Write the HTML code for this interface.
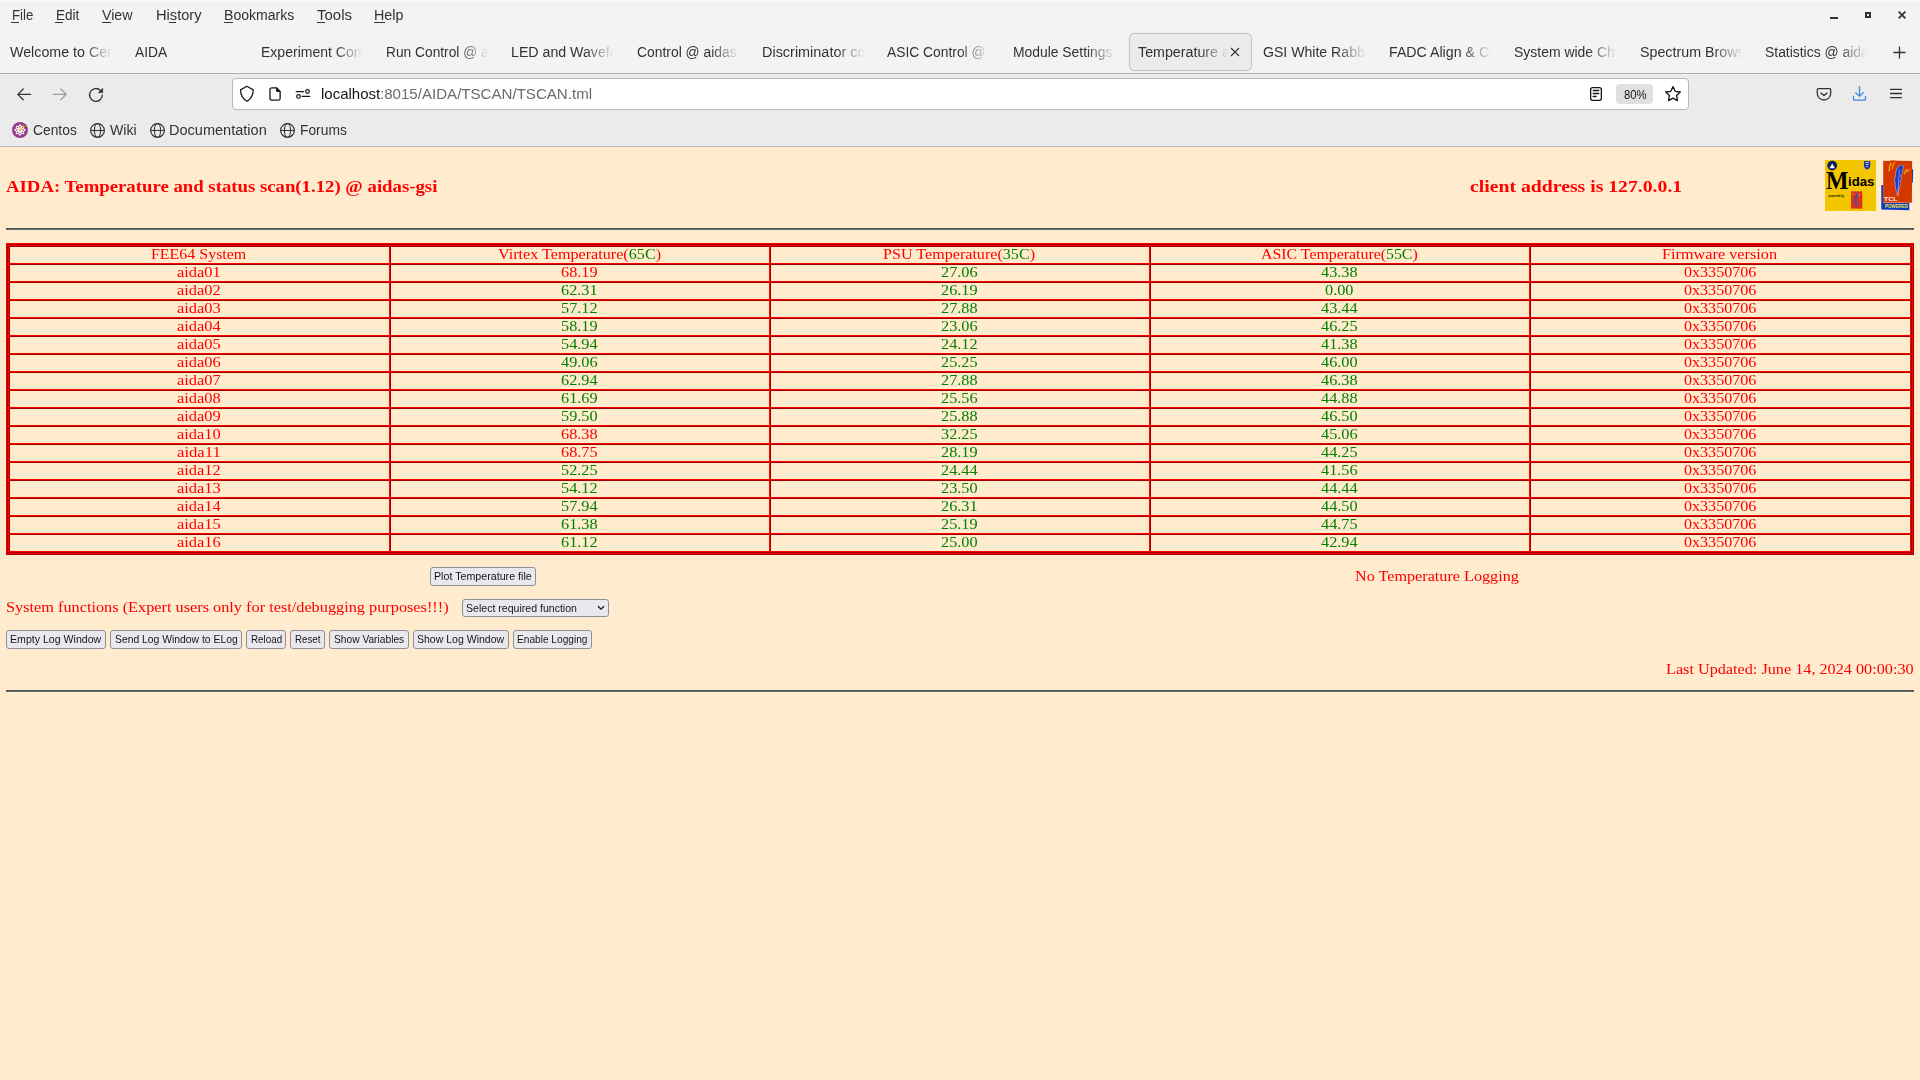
<!DOCTYPE html>
<html><head><meta charset="utf-8"><title>AIDA Temperature scan</title>
<style>
html,body{margin:0;padding:0}
body{width:1920px;height:1080px;overflow:hidden;position:relative;background:#ffebcd}
.t{position:absolute;white-space:nowrap;line-height:1;transform-origin:0 0}
.abs{position:absolute}
svg{position:absolute;overflow:visible}
</style></head><body>

<div class="abs" style="left:0;top:0;width:1920px;height:73px;background:#f3f3f3"></div>
<div class="abs" style="left:0;top:0;width:1920px;height:1px;background:#fafafa"></div>
<div class="abs" style="left:0;top:72px;width:1920px;height:1px;background:#f7f7f7"></div>
<div class="abs" style="left:0;top:73px;width:1920px;height:1px;background:#aaaaaa"></div>
<div class="abs" style="left:0;top:74px;width:1920px;height:72px;background:#ebebeb"></div>
<div class="abs" style="left:0;top:74px;width:1920px;height:1px;background:#f0f0f0"></div>
<div class="abs" style="left:0;top:145px;width:1920px;height:1px;background:#eeeeee"></div>
<div class="abs" style="left:0;top:146px;width:1920px;height:1px;background:#b8b9b5"></div>
<div class="t" style="left:11.60px;top:7.13px;font-family:'Liberation Sans', sans-serif;font-size:15.2px;color:#2e3436;transform:scaleX(0.8735);">File</div>
<div class="t" style="left:55.60px;top:7.13px;font-family:'Liberation Sans', sans-serif;font-size:15.2px;color:#2e3436;transform:scaleX(0.8931);">Edit</div>
<div class="t" style="left:101.90px;top:7.13px;font-family:'Liberation Sans', sans-serif;font-size:15.2px;color:#2e3436;transform:scaleX(0.9351);">View</div>
<div class="t" style="left:155.60px;top:7.13px;font-family:'Liberation Sans', sans-serif;font-size:15.2px;color:#2e3436;transform:scaleX(0.9641);">History</div>
<div class="t" style="left:224.00px;top:7.13px;font-family:'Liberation Sans', sans-serif;font-size:15.2px;color:#2e3436;transform:scaleX(0.9260);">Bookmarks</div>
<div class="t" style="left:316.90px;top:7.13px;font-family:'Liberation Sans', sans-serif;font-size:15.2px;color:#2e3436;transform:scaleX(0.9866);">Tools</div>
<div class="t" style="left:374.40px;top:7.13px;font-family:'Liberation Sans', sans-serif;font-size:15.2px;color:#2e3436;transform:scaleX(0.9408);">Help</div>
<div class="abs" style="left:11px;top:22px;width:8px;height:1px;background:#2e3436"></div>
<div class="abs" style="left:55px;top:22px;width:8px;height:1px;background:#2e3436"></div>
<div class="abs" style="left:102px;top:22px;width:9px;height:1px;background:#2e3436"></div>
<div class="abs" style="left:169px;top:22px;width:7px;height:1px;background:#2e3436"></div>
<div class="abs" style="left:224px;top:22px;width:9px;height:1px;background:#2e3436"></div>
<div class="abs" style="left:317px;top:22px;width:8px;height:1px;background:#2e3436"></div>
<div class="abs" style="left:374px;top:22px;width:11px;height:1px;background:#2e3436"></div>
<div class="abs" style="left:1830px;top:17px;width:8px;height:2px;background:#2e3436"></div>
<div class="abs" style="left:1865px;top:12px;width:2px;height:2px;border:2px solid #2e3436"></div>
<svg style="left:1898px;top:11px" width="8" height="8"><path d="M0 1.2L1.2 0L4 2.8L6.8 0L8 1.2L5.2 4L8 6.8L6.8 8L4 5.2L1.2 8L0 6.8L2.8 4Z" fill="#2e3436"/></svg>
<div class="abs" style="left:1129px;top:33px;width:121px;height:36px;border:1px solid #c4c4c9;border-radius:5px;background:#ebebeb;box-shadow:0 0 1.5px rgba(0,0,0,.10)"></div>
<div class="abs" style="left:7.8px;top:36px;width:107px;height:36px;overflow:hidden;-webkit-mask-image:linear-gradient(to right,#000 75px,transparent 105px);mask-image:linear-gradient(to right,#000 75px,transparent 105px)">
<div class="t" style="left:2.00px;top:7.88px;font-family:'Liberation Sans', sans-serif;font-size:15.5px;color:#2e3436;transform:scaleX(0.9187);">Welcome to Centos</div>
</div>
<div class="abs" style="left:133.2px;top:36px;width:107px;height:36px;overflow:hidden;-webkit-mask-image:linear-gradient(to right,#000 75px,transparent 105px);mask-image:linear-gradient(to right,#000 75px,transparent 105px)">
<div class="t" style="left:2.00px;top:7.88px;font-family:'Liberation Sans', sans-serif;font-size:15.5px;color:#2e3436;transform:scaleX(0.8914);">AIDA</div>
</div>
<div class="abs" style="left:258.5px;top:36px;width:107px;height:36px;overflow:hidden;-webkit-mask-image:linear-gradient(to right,#000 75px,transparent 105px);mask-image:linear-gradient(to right,#000 75px,transparent 105px)">
<div class="t" style="left:2.00px;top:7.88px;font-family:'Liberation Sans', sans-serif;font-size:15.5px;color:#2e3436;transform:scaleX(0.9052);">Experiment Control @ aidas-gsi</div>
</div>
<div class="abs" style="left:383.9px;top:36px;width:107px;height:36px;overflow:hidden;-webkit-mask-image:linear-gradient(to right,#000 75px,transparent 105px);mask-image:linear-gradient(to right,#000 75px,transparent 105px)">
<div class="t" style="left:2.00px;top:7.88px;font-family:'Liberation Sans', sans-serif;font-size:15.5px;color:#2e3436;transform:scaleX(0.8874);">Run Control @ aidas-gsi</div>
</div>
<div class="abs" style="left:509.2px;top:36px;width:107px;height:36px;overflow:hidden;-webkit-mask-image:linear-gradient(to right,#000 75px,transparent 105px);mask-image:linear-gradient(to right,#000 75px,transparent 105px)">
<div class="t" style="left:2.00px;top:7.88px;font-family:'Liberation Sans', sans-serif;font-size:15.5px;color:#2e3436;transform:scaleX(0.9144);">LED and Waveform control</div>
</div>
<div class="abs" style="left:634.6px;top:36px;width:107px;height:36px;overflow:hidden;-webkit-mask-image:linear-gradient(to right,#000 75px,transparent 105px);mask-image:linear-gradient(to right,#000 75px,transparent 105px)">
<div class="t" style="left:2.00px;top:7.88px;font-family:'Liberation Sans', sans-serif;font-size:15.5px;color:#2e3436;transform:scaleX(0.8949);">Control @ aidas-gsi</div>
</div>
<div class="abs" style="left:760.0px;top:36px;width:107px;height:36px;overflow:hidden;-webkit-mask-image:linear-gradient(to right,#000 75px,transparent 105px);mask-image:linear-gradient(to right,#000 75px,transparent 105px)">
<div class="t" style="left:2.00px;top:7.88px;font-family:'Liberation Sans', sans-serif;font-size:15.5px;color:#2e3436;transform:scaleX(0.9316);">Discriminator control</div>
</div>
<div class="abs" style="left:885.3px;top:36px;width:107px;height:36px;overflow:hidden;-webkit-mask-image:linear-gradient(to right,#000 75px,transparent 105px);mask-image:linear-gradient(to right,#000 75px,transparent 105px)">
<div class="t" style="left:2.00px;top:7.88px;font-family:'Liberation Sans', sans-serif;font-size:15.5px;color:#2e3436;transform:scaleX(0.8916);">ASIC Control @ aidas-gsi</div>
</div>
<div class="abs" style="left:1010.7px;top:36px;width:107px;height:36px;overflow:hidden;-webkit-mask-image:linear-gradient(to right,#000 75px,transparent 105px);mask-image:linear-gradient(to right,#000 75px,transparent 105px)">
<div class="t" style="left:2.00px;top:7.88px;font-family:'Liberation Sans', sans-serif;font-size:15.5px;color:#2e3436;transform:scaleX(0.8951);">Module Settings @ aidas</div>
</div>
<div class="abs" style="left:1136.0px;top:36px;width:95px;height:36px;overflow:hidden;-webkit-mask-image:linear-gradient(to right,#000 63px,transparent 93px);mask-image:linear-gradient(to right,#000 63px,transparent 93px)">
<div class="t" style="left:2.00px;top:7.88px;font-family:'Liberation Sans', sans-serif;font-size:15.5px;color:#2e3436;transform:scaleX(0.9200);">Temperature and status</div>
</div>
<div class="abs" style="left:1261.4px;top:36px;width:107px;height:36px;overflow:hidden;-webkit-mask-image:linear-gradient(to right,#000 75px,transparent 105px);mask-image:linear-gradient(to right,#000 75px,transparent 105px)">
<div class="t" style="left:2.00px;top:7.88px;font-family:'Liberation Sans', sans-serif;font-size:15.5px;color:#2e3436;transform:scaleX(0.9091);">GSI White Rabbit</div>
</div>
<div class="abs" style="left:1386.8px;top:36px;width:107px;height:36px;overflow:hidden;-webkit-mask-image:linear-gradient(to right,#000 75px,transparent 105px);mask-image:linear-gradient(to right,#000 75px,transparent 105px)">
<div class="t" style="left:2.00px;top:7.88px;font-family:'Liberation Sans', sans-serif;font-size:15.5px;color:#2e3436;transform:scaleX(0.9154);">FADC Align & Control</div>
</div>
<div class="abs" style="left:1512.1px;top:36px;width:107px;height:36px;overflow:hidden;-webkit-mask-image:linear-gradient(to right,#000 75px,transparent 105px);mask-image:linear-gradient(to right,#000 75px,transparent 105px)">
<div class="t" style="left:2.00px;top:7.88px;font-family:'Liberation Sans', sans-serif;font-size:15.5px;color:#2e3436;transform:scaleX(0.9001);">System wide Checks</div>
</div>
<div class="abs" style="left:1637.5px;top:36px;width:107px;height:36px;overflow:hidden;-webkit-mask-image:linear-gradient(to right,#000 75px,transparent 105px);mask-image:linear-gradient(to right,#000 75px,transparent 105px)">
<div class="t" style="left:2.00px;top:7.88px;font-family:'Liberation Sans', sans-serif;font-size:15.5px;color:#2e3436;transform:scaleX(0.9197);">Spectrum Browser</div>
</div>
<div class="abs" style="left:1762.8px;top:36px;width:107px;height:36px;overflow:hidden;-webkit-mask-image:linear-gradient(to right,#000 75px,transparent 105px);mask-image:linear-gradient(to right,#000 75px,transparent 105px)">
<div class="t" style="left:2.00px;top:7.88px;font-family:'Liberation Sans', sans-serif;font-size:15.5px;color:#2e3436;transform:scaleX(0.8963);">Statistics @ aidas-gsi</div>
</div>
<svg style="left:1230px;top:47px" width="10" height="10"><path d="M1 1L9 9M9 1L1 9" stroke="#2e3436" stroke-width="1.1"/></svg>
<svg style="left:1893px;top:46px" width="13" height="13"><path d="M6.5 0.5V12.5M0.5 6.5H12.5" stroke="#2e3436" stroke-width="1.3"/></svg>
<svg style="left:16px;top:88px" width="16" height="13"><path d="M1.8 6.4H14.6M7.2 1L1.8 6.4L7.2 11.8" fill="none" stroke="#2e3436" stroke-width="1.25" stroke-linecap="round" stroke-linejoin="round"/></svg>
<svg style="left:52px;top:88px" width="16" height="13"><path d="M1.4 6.4H14.2M8.8 1L14.2 6.4L8.8 11.8" fill="none" stroke="#9a9c9b" stroke-width="1.25" stroke-linecap="round" stroke-linejoin="round"/></svg>
<svg style="left:88px;top:87px" width="16" height="16"><path d="M14.34 8.23A6.4 6.4 0 1 1 12.3 3.2" fill="none" stroke="#2e3436" stroke-width="1.3" stroke-linecap="round"/><path d="M10.1 5.8L14.8 5.8L14.8 1Z" fill="#2e3436" stroke="#2e3436" stroke-width="0.4" stroke-linejoin="round"/></svg>
<div class="abs" style="left:232px;top:78px;width:1455px;height:30px;background:#fff;border:1px solid #b8b9b5;border-radius:4px"></div>
<svg style="left:240px;top:85px" width="14" height="18"><path d="M6.9 1.3L13.25 4.9C13.25 10.2 10.6 13.9 6.9 16.3C3.2 13.9 0.55 10.2 0.55 4.9Z" fill="none" stroke="#15141a" stroke-width="1.25" stroke-linejoin="round"/></svg>
<svg style="left:269px;top:87px" width="13" height="15"><path d="M7.6 0.85H2.8A1.85 1.85 0 0 0 0.95 2.7V11.3A1.85 1.85 0 0 0 2.8 13.15H9.3A1.85 1.85 0 0 0 11.15 11.3V4.4Z" fill="none" stroke="#15141a" stroke-width="1.3" stroke-linejoin="round"/><path d="M7.6 0.85V4.4H11.15Z" fill="#15141a" stroke="#15141a" stroke-width="1" stroke-linejoin="round"/></svg>
<svg style="left:295px;top:88px" width="16" height="12"><path d="M1.2 3.5H8.6M7.3 8.4H14.7" fill="none" stroke="#15141a" stroke-width="1.25" stroke-linecap="round"/><circle cx="12.5" cy="3.5" r="1.85" fill="none" stroke="#15141a" stroke-width="1.2"/><circle cx="3.5" cy="8.4" r="1.85" fill="none" stroke="#15141a" stroke-width="1.2"/></svg>
<div class="t" style="left:320.50px;top:86.30px;font-family:'Liberation Sans', sans-serif;font-size:15px;color:#15141a;transform:scaleX(1.0008);">localhost</div>
<div class="t" style="left:379.75px;top:86.30px;font-family:'Liberation Sans', sans-serif;font-size:15px;color:#6a6a70;transform:scaleX(1.0055);">:8015/AIDA/TSCAN/TSCAN.tml</div>
<svg style="left:1590px;top:87px" width="12" height="14"><rect x="0.65" y="0.65" width="10.7" height="12.7" rx="2" fill="none" stroke="#15141a" stroke-width="1.3"/><path d="M3.2 3.5H8.8M3.2 6.5H8.8M3.2 9.5H6" stroke="#15141a" stroke-width="1.3" stroke-linecap="round"/></svg>
<div class="abs" style="left:1616px;top:84px;width:37px;height:20px;background:#e0e0e0;border-radius:4px"></div>
<div class="t" style="left:1623.50px;top:88.54px;font-family:'Liberation Sans', sans-serif;font-size:12px;color:#15141a;transform:scaleX(0.9448);">80%</div>
<svg style="left:1664px;top:85px" width="18" height="17"><path d="M9 1.6L11.2 6.3L16.3 7L12.6 10.5L13.5 15.6L9 13.1L4.5 15.6L5.4 10.5L1.7 7L6.8 6.3Z" fill="none" stroke="#15141a" stroke-width="1.3" stroke-linejoin="round"/></svg>
<svg style="left:1816px;top:87px" width="16" height="15"><path d="M2.4 1.6H13.6A1.1 1.1 0 0 1 14.7 2.7V6.6A6.7 6.4 0 0 1 1.3 6.6V2.7A1.1 1.1 0 0 1 2.4 1.6Z" fill="none" stroke="#2e3436" stroke-width="1.3"/><path d="M5 5.9L8 8.6L11 5.9" fill="none" stroke="#2e3436" stroke-width="1.4" stroke-linecap="round" stroke-linejoin="round"/></svg>
<svg style="left:1852px;top:85px" width="16" height="17"><path d="M7.5 1.6V11.3M3.7 7.6L7.5 11.3L11.3 7.6M1.5 11.4V13.9A1.2 1.2 0 0 0 2.7 15.1H12.3A1.2 1.2 0 0 0 13.5 13.9V11.4" fill="none" stroke="#3d8be0" stroke-width="1.3" stroke-linecap="round" stroke-linejoin="round"/></svg>
<svg style="left:1889px;top:88px" width="14" height="11"><path d="M1.5 1.4H12.5M1.5 5.5H12.5M1.5 9.6H12.5" stroke="#2e3436" stroke-width="1.3" stroke-linecap="round"/></svg>
<svg style="left:12px;top:122px" width="16" height="16"><circle cx="8" cy="8" r="8" fill="#963d87"/><polygon points="8.00,2.00 9.65,4.03 12.24,3.76 11.97,6.35 14.00,8.00 11.97,9.65 12.24,12.24 9.65,11.97 8.00,14.00 6.35,11.97 3.76,12.24 4.03,9.65 2.00,8.00 4.03,6.35 3.76,3.76 6.35,4.03" fill="#fbf6fb"/><rect x="7.2" y="3.9" width="1.6" height="1.6" fill="#b46aa8"/><rect x="7.2" y="10.5" width="1.6" height="1.6" fill="#b46aa8"/><rect x="3.9" y="7.2" width="1.6" height="1.6" fill="#b46aa8"/><rect x="10.5" y="7.2" width="1.6" height="1.6" fill="#b46aa8"/><circle cx="5.5" cy="5.5" r="0.8" fill="#963d87"/><circle cx="5.5" cy="10.5" r="0.8" fill="#963d87"/><circle cx="10.5" cy="10.5" r="0.8" fill="#963d87"/><path d="M8.8 7.2L11.6 4.4" stroke="#f0a800" stroke-width="1.2"/><circle cx="11.4" cy="4.6" r="1.1" fill="#f0a800"/><rect x="7.1" y="7.1" width="1.8" height="1.8" fill="#eea020"/></svg>
<div class="t" style="left:32.60px;top:121.88px;font-family:'Liberation Sans', sans-serif;font-size:15.5px;color:#2e3436;transform:scaleX(0.8921);">Centos</div>
<svg style="left:90px;top:122px" width="16" height="17"><circle cx="7.5" cy="8.4" r="6.85" fill="none" stroke="#2e3436" stroke-width="1.2"/><ellipse cx="7.5" cy="8.4" rx="3.05" ry="6.85" fill="none" stroke="#2e3436" stroke-width="1.1"/><path d="M0.8 8.5H14.2" stroke="#2e3436" stroke-width="1"/></svg>
<div class="t" style="left:109.70px;top:121.88px;font-family:'Liberation Sans', sans-serif;font-size:15.5px;color:#2e3436;transform:scaleX(0.9120);">Wiki</div>
<svg style="left:150px;top:122px" width="16" height="17"><circle cx="7.5" cy="8.4" r="6.85" fill="none" stroke="#2e3436" stroke-width="1.2"/><ellipse cx="7.5" cy="8.4" rx="3.05" ry="6.85" fill="none" stroke="#2e3436" stroke-width="1.1"/><path d="M0.8 8.5H14.2" stroke="#2e3436" stroke-width="1"/></svg>
<div class="t" style="left:169.20px;top:121.88px;font-family:'Liberation Sans', sans-serif;font-size:15.5px;color:#2e3436;transform:scaleX(0.9372);">Documentation</div>
<svg style="left:280px;top:122px" width="16" height="17"><circle cx="7.5" cy="8.4" r="6.85" fill="none" stroke="#2e3436" stroke-width="1.2"/><ellipse cx="7.5" cy="8.4" rx="3.05" ry="6.85" fill="none" stroke="#2e3436" stroke-width="1.1"/><path d="M0.8 8.5H14.2" stroke="#2e3436" stroke-width="1"/></svg>
<div class="t" style="left:300.20px;top:121.88px;font-family:'Liberation Sans', sans-serif;font-size:15.5px;color:#2e3436;transform:scaleX(0.8910);">Forums</div>
<div class="t" style="left:6.00px;top:178.60px;font-family:'Liberation Serif', serif;font-size:16px;font-weight:bold;color:#ff0000;transform:scaleX(1.1723);">AIDA: Temperature and status scan(1.12) @ aidas-gsi</div>
<div class="t" style="left:1470.00px;top:178.60px;font-family:'Liberation Serif', serif;font-size:16px;font-weight:bold;color:#ff0000;transform:scaleX(1.2326);">client address is 127.0.0.1</div>
<svg style="left:1825px;top:160px" width="51" height="51" viewBox="0 0 51 51">
<rect x="0" y="0" width="51" height="51" fill="#f3c600"/>
<circle cx="7.2" cy="5.6" r="4.9" fill="#0c1c5c"/>
<path d="M4.4 8.2L7.2 3.6L10 8.2Z" fill="#f4f4f4"/>
<path d="M39 0.9H45.3V5.8C45.3 7.6 43.9 9 42.15 9.8C40.4 9 39 7.6 39 5.8Z" fill="#1c38a8"/>
<path d="M40.3 2.4H44M40.6 4.4H43.7M41.2 6.6H43.1" stroke="#dfe6ff" stroke-width="0.8"/>
<text x="1" y="28.7" font-family="Liberation Serif" font-weight="bold" font-size="25" fill="#000" textLength="22.5" lengthAdjust="spacingAndGlyphs">M</text>
<text x="23" y="26.2" font-family="Liberation Sans" font-weight="bold" font-size="12" fill="#000" textLength="26.3" lengthAdjust="spacingAndGlyphs">idas</text>
<text x="3.6" y="36.6" font-family="Liberation Sans" font-weight="bold" font-size="3.2" fill="#111" textLength="15.5" lengthAdjust="spacingAndGlyphs">powered by</text>
<rect x="26" y="31.4" width="11.3" height="17.2" fill="#d8341c"/>
<path d="M32.8 33.8C30.8 36 30.4 41 31.5 46" stroke="#2a50d0" stroke-width="1.8" fill="none"/>
<path d="M27.5 33L28.8 35.5M34.5 34L34 36" stroke="#f0b020" stroke-width="0.8"/>
</svg>
<svg style="left:1880px;top:159px" width="34" height="53" viewBox="0 0 34 53">
<path d="M1.3 26L3.2 26L3.5 44L29.3 44L29.3 51.2L1.3 50.6Z" fill="#1038c0"/>
<path d="M31.6 10.4L33.2 10.2L32.8 23.8L31.2 24Z" fill="#1038c0"/>
<path d="M3.2 1.8L9 1.9L12 1.2L18 1.8L32.1 2L31.9 43.8L3.2 43.5Z" fill="#d43800"/>
<path d="M21.5 5.6C24 6 23.6 10 22 12.4L23.2 13L20.4 17.4L22 18L20 23L20.8 24.4L18.8 30L17.8 37C16.4 33 14.8 28 15 23L14.2 19.8L15.6 18C15 12 17.4 7 21.5 5.6Z" fill="#1a3ec8" stroke="#f2e2dc" stroke-width="0.45"/>
<path d="M19.6 10.5C18.6 18 18.4 28 17.9 36" stroke="#e8ecff" stroke-width="0.45" fill="none"/>
<path d="M9.4 12.2C9 9 9.6 6 11.2 3.8M12.2 10.2C12.2 7.6 13 5.4 14.8 3.4" stroke="#f0b418" stroke-width="1.15" fill="none"/>
<path d="M24.2 15.2C25 13 25.8 11.4 26.6 10.2M27.2 13C27.6 12 28 11.2 28.6 10.6M29.8 10.4L30.2 10" stroke="#f0c018" stroke-width="1.1" fill="none"/>
<text x="4" y="41.8" font-family="Liberation Sans" font-weight="bold" font-size="6.2" fill="#f4f0f0" textLength="13.5" lengthAdjust="spacingAndGlyphs">TCL</text>
<text x="5" y="49" font-family="Liberation Sans" font-weight="bold" font-size="5" fill="#e8e838" textLength="23" lengthAdjust="spacingAndGlyphs">POWERED</text>
</svg>
<div class="abs" style="left:6px;top:228px;width:1908px;height:1px;background:#4f5256"></div><div class="abs" style="left:6px;top:229px;width:1908px;height:1px;background:#65686c"></div>
<div class="abs" style="left:6px;top:243px;width:1906px;height:310px;border-style:solid;border-width:1px;border-color:#ff0000 #a40000 #a40000 #ff0000"></div>
<div class="abs" style="left:7px;top:244px;width:1904px;height:308px;border-style:solid;border-width:1px;border-color:#a40000 #ff0000 #ff0000 #a40000"></div>
<div class="abs" style="left:8px;top:245px;width:1902px;height:306px;border-style:solid;border-width:1px;border-color:#ff0000 #a40000 #a40000 #ff0000"></div>
<div class="abs" style="left:9px;top:246px;width:1900px;height:304px;border-style:solid;border-width:1px;border-color:#a40000 #ff0000 #ff0000 #a40000"></div>
<div class="abs" style="left:10px;top:263px;width:1900px;height:1px;background:#ff0000"></div>
<div class="abs" style="left:10px;top:264px;width:1900px;height:1px;background:#a40000"></div>
<div class="abs" style="left:10px;top:281px;width:1900px;height:1px;background:#ff0000"></div>
<div class="abs" style="left:10px;top:282px;width:1900px;height:1px;background:#a40000"></div>
<div class="abs" style="left:10px;top:299px;width:1900px;height:1px;background:#ff0000"></div>
<div class="abs" style="left:10px;top:300px;width:1900px;height:1px;background:#a40000"></div>
<div class="abs" style="left:10px;top:317px;width:1900px;height:1px;background:#ff0000"></div>
<div class="abs" style="left:10px;top:318px;width:1900px;height:1px;background:#a40000"></div>
<div class="abs" style="left:10px;top:335px;width:1900px;height:1px;background:#ff0000"></div>
<div class="abs" style="left:10px;top:336px;width:1900px;height:1px;background:#a40000"></div>
<div class="abs" style="left:10px;top:353px;width:1900px;height:1px;background:#ff0000"></div>
<div class="abs" style="left:10px;top:354px;width:1900px;height:1px;background:#a40000"></div>
<div class="abs" style="left:10px;top:371px;width:1900px;height:1px;background:#ff0000"></div>
<div class="abs" style="left:10px;top:372px;width:1900px;height:1px;background:#a40000"></div>
<div class="abs" style="left:10px;top:389px;width:1900px;height:1px;background:#ff0000"></div>
<div class="abs" style="left:10px;top:390px;width:1900px;height:1px;background:#a40000"></div>
<div class="abs" style="left:10px;top:407px;width:1900px;height:1px;background:#ff0000"></div>
<div class="abs" style="left:10px;top:408px;width:1900px;height:1px;background:#a40000"></div>
<div class="abs" style="left:10px;top:425px;width:1900px;height:1px;background:#ff0000"></div>
<div class="abs" style="left:10px;top:426px;width:1900px;height:1px;background:#a40000"></div>
<div class="abs" style="left:10px;top:443px;width:1900px;height:1px;background:#ff0000"></div>
<div class="abs" style="left:10px;top:444px;width:1900px;height:1px;background:#a40000"></div>
<div class="abs" style="left:10px;top:461px;width:1900px;height:1px;background:#ff0000"></div>
<div class="abs" style="left:10px;top:462px;width:1900px;height:1px;background:#a40000"></div>
<div class="abs" style="left:10px;top:479px;width:1900px;height:1px;background:#ff0000"></div>
<div class="abs" style="left:10px;top:480px;width:1900px;height:1px;background:#a40000"></div>
<div class="abs" style="left:10px;top:497px;width:1900px;height:1px;background:#ff0000"></div>
<div class="abs" style="left:10px;top:498px;width:1900px;height:1px;background:#a40000"></div>
<div class="abs" style="left:10px;top:515px;width:1900px;height:1px;background:#ff0000"></div>
<div class="abs" style="left:10px;top:516px;width:1900px;height:1px;background:#a40000"></div>
<div class="abs" style="left:10px;top:533px;width:1900px;height:1px;background:#ff0000"></div>
<div class="abs" style="left:10px;top:534px;width:1900px;height:1px;background:#a40000"></div>
<div class="abs" style="left:389px;top:247px;width:1px;height:304px;background:#ff0000"></div>
<div class="abs" style="left:390px;top:247px;width:1px;height:304px;background:#a40000"></div>
<div class="abs" style="left:769px;top:247px;width:1px;height:304px;background:#ff0000"></div>
<div class="abs" style="left:770px;top:247px;width:1px;height:304px;background:#a40000"></div>
<div class="abs" style="left:1149px;top:247px;width:1px;height:304px;background:#ff0000"></div>
<div class="abs" style="left:1150px;top:247px;width:1px;height:304px;background:#a40000"></div>
<div class="abs" style="left:1529px;top:247px;width:1px;height:304px;background:#ff0000"></div>
<div class="abs" style="left:1530px;top:247px;width:1px;height:304px;background:#a40000"></div>
<div class="t" style="left:151.32px;top:247.11px;font-family:&quot;Liberation Serif&quot;,serif;font-size:14.2px;transform:scaleX(1.1243)"><span style="color:#ff0000">FEE64 System</span></div>
<div class="t" style="left:497.92px;top:247.11px;font-family:&quot;Liberation Serif&quot;,serif;font-size:14.2px;transform:scaleX(1.1379)"><span style="color:#ff0000">Virtex Temperature(</span><span style="color:#008000">65C</span><span style="color:#ff0000">)</span></div>
<div class="t" style="left:883.42px;top:247.11px;font-family:&quot;Liberation Serif&quot;,serif;font-size:14.2px;transform:scaleX(1.1354)"><span style="color:#ff0000">PSU Temperature(</span><span style="color:#008000">35C</span><span style="color:#ff0000">)</span></div>
<div class="t" style="left:1261.07px;top:247.11px;font-family:&quot;Liberation Serif&quot;,serif;font-size:14.2px;transform:scaleX(1.1179)"><span style="color:#ff0000">ASIC Temperature(</span><span style="color:#008000">55C</span><span style="color:#ff0000">)</span></div>
<div class="t" style="left:1662.44px;top:247.11px;font-family:&quot;Liberation Serif&quot;,serif;font-size:14.2px;transform:scaleX(1.1448)"><span style="color:#ff0000">Firmware version</span></div>
<div class="t" style="left:177.08px;top:265.11px;font-family:&quot;Liberation Serif&quot;,serif;font-size:14.2px;transform:scaleX(1.1582)"><span style="color:#ff0000">aida01</span></div>
<div class="t" style="left:561.18px;top:265.11px;font-family:&quot;Liberation Serif&quot;,serif;font-size:14.2px;transform:scaleX(1.1469)"><span style="color:#ff0000">68.19</span></div>
<div class="t" style="left:941.18px;top:265.11px;font-family:&quot;Liberation Serif&quot;,serif;font-size:14.2px;transform:scaleX(1.1469)"><span style="color:#008000">27.06</span></div>
<div class="t" style="left:1321.18px;top:265.11px;font-family:&quot;Liberation Serif&quot;,serif;font-size:14.2px;transform:scaleX(1.1469)"><span style="color:#008000">43.38</span></div>
<div class="t" style="left:1683.82px;top:265.11px;font-family:&quot;Liberation Serif&quot;,serif;font-size:14.2px;transform:scaleX(1.1325)"><span style="color:#ff0000">0x3350706</span></div>
<div class="t" style="left:177.08px;top:283.11px;font-family:&quot;Liberation Serif&quot;,serif;font-size:14.2px;transform:scaleX(1.1582)"><span style="color:#ff0000">aida02</span></div>
<div class="t" style="left:561.18px;top:283.11px;font-family:&quot;Liberation Serif&quot;,serif;font-size:14.2px;transform:scaleX(1.1469)"><span style="color:#008000">62.31</span></div>
<div class="t" style="left:941.18px;top:283.11px;font-family:&quot;Liberation Serif&quot;,serif;font-size:14.2px;transform:scaleX(1.1469)"><span style="color:#008000">26.19</span></div>
<div class="t" style="left:1325.25px;top:283.11px;font-family:&quot;Liberation Serif&quot;,serif;font-size:14.2px;transform:scaleX(1.1469)"><span style="color:#008000">0.00</span></div>
<div class="t" style="left:1683.82px;top:283.11px;font-family:&quot;Liberation Serif&quot;,serif;font-size:14.2px;transform:scaleX(1.1325)"><span style="color:#ff0000">0x3350706</span></div>
<div class="t" style="left:177.08px;top:301.11px;font-family:&quot;Liberation Serif&quot;,serif;font-size:14.2px;transform:scaleX(1.1582)"><span style="color:#ff0000">aida03</span></div>
<div class="t" style="left:561.18px;top:301.11px;font-family:&quot;Liberation Serif&quot;,serif;font-size:14.2px;transform:scaleX(1.1469)"><span style="color:#008000">57.12</span></div>
<div class="t" style="left:941.18px;top:301.11px;font-family:&quot;Liberation Serif&quot;,serif;font-size:14.2px;transform:scaleX(1.1469)"><span style="color:#008000">27.88</span></div>
<div class="t" style="left:1321.18px;top:301.11px;font-family:&quot;Liberation Serif&quot;,serif;font-size:14.2px;transform:scaleX(1.1469)"><span style="color:#008000">43.44</span></div>
<div class="t" style="left:1683.82px;top:301.11px;font-family:&quot;Liberation Serif&quot;,serif;font-size:14.2px;transform:scaleX(1.1325)"><span style="color:#ff0000">0x3350706</span></div>
<div class="t" style="left:177.08px;top:319.11px;font-family:&quot;Liberation Serif&quot;,serif;font-size:14.2px;transform:scaleX(1.1582)"><span style="color:#ff0000">aida04</span></div>
<div class="t" style="left:561.18px;top:319.11px;font-family:&quot;Liberation Serif&quot;,serif;font-size:14.2px;transform:scaleX(1.1469)"><span style="color:#008000">58.19</span></div>
<div class="t" style="left:941.18px;top:319.11px;font-family:&quot;Liberation Serif&quot;,serif;font-size:14.2px;transform:scaleX(1.1469)"><span style="color:#008000">23.06</span></div>
<div class="t" style="left:1321.18px;top:319.11px;font-family:&quot;Liberation Serif&quot;,serif;font-size:14.2px;transform:scaleX(1.1469)"><span style="color:#008000">46.25</span></div>
<div class="t" style="left:1683.82px;top:319.11px;font-family:&quot;Liberation Serif&quot;,serif;font-size:14.2px;transform:scaleX(1.1325)"><span style="color:#ff0000">0x3350706</span></div>
<div class="t" style="left:177.08px;top:337.11px;font-family:&quot;Liberation Serif&quot;,serif;font-size:14.2px;transform:scaleX(1.1582)"><span style="color:#ff0000">aida05</span></div>
<div class="t" style="left:561.18px;top:337.11px;font-family:&quot;Liberation Serif&quot;,serif;font-size:14.2px;transform:scaleX(1.1469)"><span style="color:#008000">54.94</span></div>
<div class="t" style="left:941.18px;top:337.11px;font-family:&quot;Liberation Serif&quot;,serif;font-size:14.2px;transform:scaleX(1.1469)"><span style="color:#008000">24.12</span></div>
<div class="t" style="left:1321.18px;top:337.11px;font-family:&quot;Liberation Serif&quot;,serif;font-size:14.2px;transform:scaleX(1.1469)"><span style="color:#008000">41.38</span></div>
<div class="t" style="left:1683.82px;top:337.11px;font-family:&quot;Liberation Serif&quot;,serif;font-size:14.2px;transform:scaleX(1.1325)"><span style="color:#ff0000">0x3350706</span></div>
<div class="t" style="left:177.08px;top:355.11px;font-family:&quot;Liberation Serif&quot;,serif;font-size:14.2px;transform:scaleX(1.1582)"><span style="color:#ff0000">aida06</span></div>
<div class="t" style="left:561.18px;top:355.11px;font-family:&quot;Liberation Serif&quot;,serif;font-size:14.2px;transform:scaleX(1.1469)"><span style="color:#008000">49.06</span></div>
<div class="t" style="left:941.18px;top:355.11px;font-family:&quot;Liberation Serif&quot;,serif;font-size:14.2px;transform:scaleX(1.1469)"><span style="color:#008000">25.25</span></div>
<div class="t" style="left:1321.18px;top:355.11px;font-family:&quot;Liberation Serif&quot;,serif;font-size:14.2px;transform:scaleX(1.1469)"><span style="color:#008000">46.00</span></div>
<div class="t" style="left:1683.82px;top:355.11px;font-family:&quot;Liberation Serif&quot;,serif;font-size:14.2px;transform:scaleX(1.1325)"><span style="color:#ff0000">0x3350706</span></div>
<div class="t" style="left:177.08px;top:373.11px;font-family:&quot;Liberation Serif&quot;,serif;font-size:14.2px;transform:scaleX(1.1582)"><span style="color:#ff0000">aida07</span></div>
<div class="t" style="left:561.18px;top:373.11px;font-family:&quot;Liberation Serif&quot;,serif;font-size:14.2px;transform:scaleX(1.1469)"><span style="color:#008000">62.94</span></div>
<div class="t" style="left:941.18px;top:373.11px;font-family:&quot;Liberation Serif&quot;,serif;font-size:14.2px;transform:scaleX(1.1469)"><span style="color:#008000">27.88</span></div>
<div class="t" style="left:1321.18px;top:373.11px;font-family:&quot;Liberation Serif&quot;,serif;font-size:14.2px;transform:scaleX(1.1469)"><span style="color:#008000">46.38</span></div>
<div class="t" style="left:1683.82px;top:373.11px;font-family:&quot;Liberation Serif&quot;,serif;font-size:14.2px;transform:scaleX(1.1325)"><span style="color:#ff0000">0x3350706</span></div>
<div class="t" style="left:177.08px;top:391.11px;font-family:&quot;Liberation Serif&quot;,serif;font-size:14.2px;transform:scaleX(1.1582)"><span style="color:#ff0000">aida08</span></div>
<div class="t" style="left:561.18px;top:391.11px;font-family:&quot;Liberation Serif&quot;,serif;font-size:14.2px;transform:scaleX(1.1469)"><span style="color:#008000">61.69</span></div>
<div class="t" style="left:941.18px;top:391.11px;font-family:&quot;Liberation Serif&quot;,serif;font-size:14.2px;transform:scaleX(1.1469)"><span style="color:#008000">25.56</span></div>
<div class="t" style="left:1321.18px;top:391.11px;font-family:&quot;Liberation Serif&quot;,serif;font-size:14.2px;transform:scaleX(1.1469)"><span style="color:#008000">44.88</span></div>
<div class="t" style="left:1683.82px;top:391.11px;font-family:&quot;Liberation Serif&quot;,serif;font-size:14.2px;transform:scaleX(1.1325)"><span style="color:#ff0000">0x3350706</span></div>
<div class="t" style="left:177.08px;top:409.11px;font-family:&quot;Liberation Serif&quot;,serif;font-size:14.2px;transform:scaleX(1.1582)"><span style="color:#ff0000">aida09</span></div>
<div class="t" style="left:561.18px;top:409.11px;font-family:&quot;Liberation Serif&quot;,serif;font-size:14.2px;transform:scaleX(1.1469)"><span style="color:#008000">59.50</span></div>
<div class="t" style="left:941.18px;top:409.11px;font-family:&quot;Liberation Serif&quot;,serif;font-size:14.2px;transform:scaleX(1.1469)"><span style="color:#008000">25.88</span></div>
<div class="t" style="left:1321.18px;top:409.11px;font-family:&quot;Liberation Serif&quot;,serif;font-size:14.2px;transform:scaleX(1.1469)"><span style="color:#008000">46.50</span></div>
<div class="t" style="left:1683.82px;top:409.11px;font-family:&quot;Liberation Serif&quot;,serif;font-size:14.2px;transform:scaleX(1.1325)"><span style="color:#ff0000">0x3350706</span></div>
<div class="t" style="left:177.08px;top:427.11px;font-family:&quot;Liberation Serif&quot;,serif;font-size:14.2px;transform:scaleX(1.1582)"><span style="color:#ff0000">aida10</span></div>
<div class="t" style="left:561.18px;top:427.11px;font-family:&quot;Liberation Serif&quot;,serif;font-size:14.2px;transform:scaleX(1.1469)"><span style="color:#ff0000">68.38</span></div>
<div class="t" style="left:941.18px;top:427.11px;font-family:&quot;Liberation Serif&quot;,serif;font-size:14.2px;transform:scaleX(1.1469)"><span style="color:#008000">32.25</span></div>
<div class="t" style="left:1321.18px;top:427.11px;font-family:&quot;Liberation Serif&quot;,serif;font-size:14.2px;transform:scaleX(1.1469)"><span style="color:#008000">45.06</span></div>
<div class="t" style="left:1683.82px;top:427.11px;font-family:&quot;Liberation Serif&quot;,serif;font-size:14.2px;transform:scaleX(1.1325)"><span style="color:#ff0000">0x3350706</span></div>
<div class="t" style="left:177.08px;top:445.11px;font-family:&quot;Liberation Serif&quot;,serif;font-size:14.2px;transform:scaleX(1.1745)"><span style="color:#ff0000">aida11</span></div>
<div class="t" style="left:561.18px;top:445.11px;font-family:&quot;Liberation Serif&quot;,serif;font-size:14.2px;transform:scaleX(1.1469)"><span style="color:#ff0000">68.75</span></div>
<div class="t" style="left:941.18px;top:445.11px;font-family:&quot;Liberation Serif&quot;,serif;font-size:14.2px;transform:scaleX(1.1469)"><span style="color:#008000">28.19</span></div>
<div class="t" style="left:1321.18px;top:445.11px;font-family:&quot;Liberation Serif&quot;,serif;font-size:14.2px;transform:scaleX(1.1469)"><span style="color:#008000">44.25</span></div>
<div class="t" style="left:1683.82px;top:445.11px;font-family:&quot;Liberation Serif&quot;,serif;font-size:14.2px;transform:scaleX(1.1325)"><span style="color:#ff0000">0x3350706</span></div>
<div class="t" style="left:177.08px;top:463.11px;font-family:&quot;Liberation Serif&quot;,serif;font-size:14.2px;transform:scaleX(1.1582)"><span style="color:#ff0000">aida12</span></div>
<div class="t" style="left:561.18px;top:463.11px;font-family:&quot;Liberation Serif&quot;,serif;font-size:14.2px;transform:scaleX(1.1469)"><span style="color:#008000">52.25</span></div>
<div class="t" style="left:941.18px;top:463.11px;font-family:&quot;Liberation Serif&quot;,serif;font-size:14.2px;transform:scaleX(1.1469)"><span style="color:#008000">24.44</span></div>
<div class="t" style="left:1321.18px;top:463.11px;font-family:&quot;Liberation Serif&quot;,serif;font-size:14.2px;transform:scaleX(1.1469)"><span style="color:#008000">41.56</span></div>
<div class="t" style="left:1683.82px;top:463.11px;font-family:&quot;Liberation Serif&quot;,serif;font-size:14.2px;transform:scaleX(1.1325)"><span style="color:#ff0000">0x3350706</span></div>
<div class="t" style="left:177.08px;top:481.11px;font-family:&quot;Liberation Serif&quot;,serif;font-size:14.2px;transform:scaleX(1.1582)"><span style="color:#ff0000">aida13</span></div>
<div class="t" style="left:561.18px;top:481.11px;font-family:&quot;Liberation Serif&quot;,serif;font-size:14.2px;transform:scaleX(1.1469)"><span style="color:#008000">54.12</span></div>
<div class="t" style="left:941.18px;top:481.11px;font-family:&quot;Liberation Serif&quot;,serif;font-size:14.2px;transform:scaleX(1.1469)"><span style="color:#008000">23.50</span></div>
<div class="t" style="left:1321.18px;top:481.11px;font-family:&quot;Liberation Serif&quot;,serif;font-size:14.2px;transform:scaleX(1.1469)"><span style="color:#008000">44.44</span></div>
<div class="t" style="left:1683.82px;top:481.11px;font-family:&quot;Liberation Serif&quot;,serif;font-size:14.2px;transform:scaleX(1.1325)"><span style="color:#ff0000">0x3350706</span></div>
<div class="t" style="left:177.08px;top:499.11px;font-family:&quot;Liberation Serif&quot;,serif;font-size:14.2px;transform:scaleX(1.1582)"><span style="color:#ff0000">aida14</span></div>
<div class="t" style="left:561.18px;top:499.11px;font-family:&quot;Liberation Serif&quot;,serif;font-size:14.2px;transform:scaleX(1.1469)"><span style="color:#008000">57.94</span></div>
<div class="t" style="left:941.18px;top:499.11px;font-family:&quot;Liberation Serif&quot;,serif;font-size:14.2px;transform:scaleX(1.1469)"><span style="color:#008000">26.31</span></div>
<div class="t" style="left:1321.18px;top:499.11px;font-family:&quot;Liberation Serif&quot;,serif;font-size:14.2px;transform:scaleX(1.1469)"><span style="color:#008000">44.50</span></div>
<div class="t" style="left:1683.82px;top:499.11px;font-family:&quot;Liberation Serif&quot;,serif;font-size:14.2px;transform:scaleX(1.1325)"><span style="color:#ff0000">0x3350706</span></div>
<div class="t" style="left:177.08px;top:517.11px;font-family:&quot;Liberation Serif&quot;,serif;font-size:14.2px;transform:scaleX(1.1582)"><span style="color:#ff0000">aida15</span></div>
<div class="t" style="left:561.18px;top:517.11px;font-family:&quot;Liberation Serif&quot;,serif;font-size:14.2px;transform:scaleX(1.1469)"><span style="color:#008000">61.38</span></div>
<div class="t" style="left:941.18px;top:517.11px;font-family:&quot;Liberation Serif&quot;,serif;font-size:14.2px;transform:scaleX(1.1469)"><span style="color:#008000">25.19</span></div>
<div class="t" style="left:1321.18px;top:517.11px;font-family:&quot;Liberation Serif&quot;,serif;font-size:14.2px;transform:scaleX(1.1469)"><span style="color:#008000">44.75</span></div>
<div class="t" style="left:1683.82px;top:517.11px;font-family:&quot;Liberation Serif&quot;,serif;font-size:14.2px;transform:scaleX(1.1325)"><span style="color:#ff0000">0x3350706</span></div>
<div class="t" style="left:177.08px;top:535.11px;font-family:&quot;Liberation Serif&quot;,serif;font-size:14.2px;transform:scaleX(1.1582)"><span style="color:#ff0000">aida16</span></div>
<div class="t" style="left:561.18px;top:535.11px;font-family:&quot;Liberation Serif&quot;,serif;font-size:14.2px;transform:scaleX(1.1469)"><span style="color:#008000">61.12</span></div>
<div class="t" style="left:941.18px;top:535.11px;font-family:&quot;Liberation Serif&quot;,serif;font-size:14.2px;transform:scaleX(1.1469)"><span style="color:#008000">25.00</span></div>
<div class="t" style="left:1321.18px;top:535.11px;font-family:&quot;Liberation Serif&quot;,serif;font-size:14.2px;transform:scaleX(1.1469)"><span style="color:#008000">42.94</span></div>
<div class="t" style="left:1683.82px;top:535.11px;font-family:&quot;Liberation Serif&quot;,serif;font-size:14.2px;transform:scaleX(1.1325)"><span style="color:#ff0000">0x3350706</span></div>
<div class="abs" style="left:430px;top:567px;width:104px;height:17px;background:#e9e9ed;border:1px solid #8f8f9d;border-radius:3px"></div><div class="t" style="left:434.00px;top:570.52px;font-family:'Liberation Sans', sans-serif;font-size:11.2px;color:#15141a;transform:scaleX(0.9541);">Plot Temperature file</div>
<div class="t" style="left:1355.00px;top:569.11px;font-family:'Liberation Serif', serif;font-size:14.2px;color:#ff0000;transform:scaleX(1.1402);">No Temperature Logging</div>
<div class="t" style="left:6.00px;top:600.11px;font-family:'Liberation Serif', serif;font-size:14.2px;color:#ff0000;transform:scaleX(1.1474);">System functions (Expert users only for test/debugging purposes!!!)</div>
<div class="abs" style="left:462px;top:599px;width:145px;height:16px;background:#e9e9ed;border:1px solid #8f8f9d;border-radius:3px"></div>
<div class="t" style="left:466.00px;top:602.52px;font-family:'Liberation Sans', sans-serif;font-size:11.2px;color:#15141a;transform:scaleX(0.9441);">Select required function</div>
<svg style="left:597px;top:605px" width="8" height="6"><path d="M1 1.2L4 4.2L7 1.2" fill="none" stroke="#15141a" stroke-width="1.3"/></svg>
<div class="abs" style="left:6px;top:630px;width:98px;height:17px;background:#e9e9ed;border:1px solid #8f8f9d;border-radius:3px"></div><div class="t" style="left:10.30px;top:633.52px;font-family:'Liberation Sans', sans-serif;font-size:11.2px;color:#15141a;transform:scaleX(0.9469);">Empty Log Window</div>
<div class="abs" style="left:110px;top:630px;width:130px;height:17px;background:#e9e9ed;border:1px solid #8f8f9d;border-radius:3px"></div><div class="t" style="left:114.70px;top:633.52px;font-family:'Liberation Sans', sans-serif;font-size:11.2px;color:#15141a;transform:scaleX(0.9259);">Send Log Window to ELog</div>
<div class="abs" style="left:246px;top:630px;width:38px;height:17px;background:#e9e9ed;border:1px solid #8f8f9d;border-radius:3px"></div><div class="t" style="left:250.50px;top:633.52px;font-family:'Liberation Sans', sans-serif;font-size:11.2px;color:#15141a;transform:scaleX(0.8789);">Reload</div>
<div class="abs" style="left:290px;top:630px;width:33px;height:17px;background:#e9e9ed;border:1px solid #8f8f9d;border-radius:3px"></div><div class="t" style="left:295.00px;top:633.52px;font-family:'Liberation Sans', sans-serif;font-size:11.2px;color:#15141a;transform:scaleX(0.8684);">Reset</div>
<div class="abs" style="left:329px;top:630px;width:78px;height:17px;background:#e9e9ed;border:1px solid #8f8f9d;border-radius:3px"></div><div class="t" style="left:333.70px;top:633.52px;font-family:'Liberation Sans', sans-serif;font-size:11.2px;color:#15141a;transform:scaleX(0.9130);">Show Variables</div>
<div class="abs" style="left:413px;top:630px;width:94px;height:17px;background:#e9e9ed;border:1px solid #8f8f9d;border-radius:3px"></div><div class="t" style="left:417.20px;top:633.52px;font-family:'Liberation Sans', sans-serif;font-size:11.2px;color:#15141a;transform:scaleX(0.9407);">Show Log Window</div>
<div class="abs" style="left:513px;top:630px;width:77px;height:17px;background:#e9e9ed;border:1px solid #8f8f9d;border-radius:3px"></div><div class="t" style="left:517.30px;top:633.52px;font-family:'Liberation Sans', sans-serif;font-size:11.2px;color:#15141a;transform:scaleX(0.9056);">Enable Logging</div>
<div class="t" style="left:1665.67px;top:662.11px;font-family:'Liberation Serif', serif;font-size:14.2px;color:#ff0000;transform:scaleX(1.1425);">Last Updated: June 14, 2024 00:00:30</div>
<div class="abs" style="left:6px;top:690px;width:1908px;height:1px;background:#4f5256"></div><div class="abs" style="left:6px;top:691px;width:1908px;height:1px;background:#65686c"></div>
</body></html>
